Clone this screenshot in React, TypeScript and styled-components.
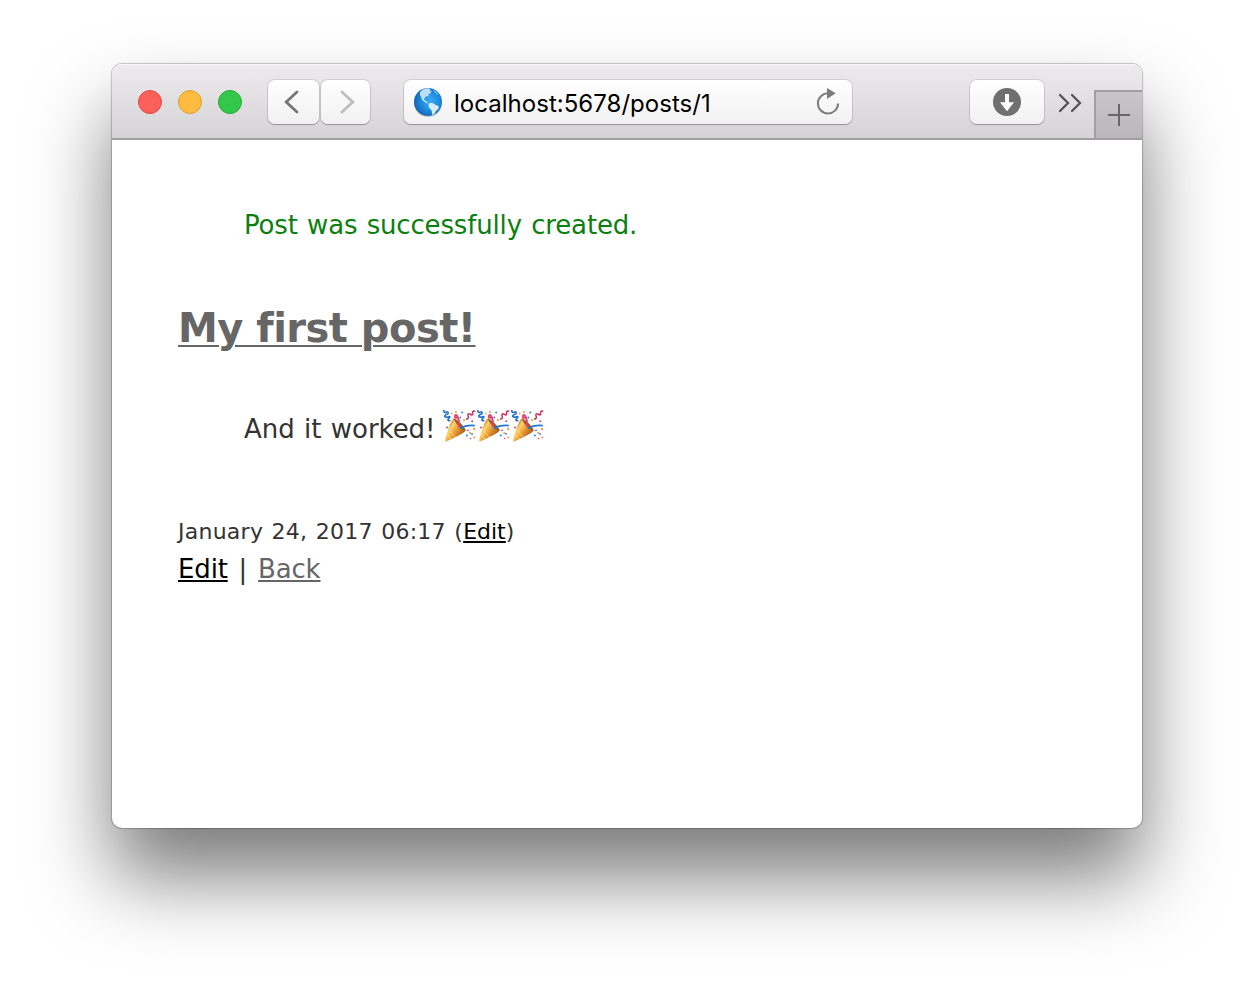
import React from "react";
import styled, { createGlobalStyle } from "styled-components";

const GlobalStyle = createGlobalStyle`
  * { box-sizing: border-box; }
  html, body { margin: 0; background: #fff; }
  body { overflow: hidden; }
`;

const Desktop = styled.div`
  width: 1254px;
  height: 988px;
  padding: 64px 112px 160px;
  background: #fff;
`;

const Window = styled.main`
  width: 1030px;
  height: 764px;
  border-radius: 10px;
  background: #fff;
  box-shadow: 0 0 1px 1px rgba(0, 0, 0, 0.22), 0 49px 80px rgba(0, 0, 0, 0.52);
`;

const Toolbar = styled.header`
  display: flex;
  align-items: flex-start;
  height: 76px;
  padding: 16px 0 0 26px;
  border-radius: 10px 10px 0 0;
  border-bottom: 2px solid #a19fa2;
  background: linear-gradient(#edebee, #d5d3d6);
  box-shadow: inset 0 1px 0 #f7f6f8;
`;

const Lights = styled.div`
  display: flex;
  gap: 16px;
  margin: 10px 26px 0 0;
`;

const Light = styled.span<{ $fill: string; $edge: string }>`
  width: 24px;
  height: 24px;
  border-radius: 50%;
  border: 1px solid ${(p) => p.$edge};
  background: ${(p) => p.$fill};
`;

const Button = styled.button<{ $width: number }>`
  display: flex;
  align-items: center;
  justify-content: center;
  width: ${(p) => p.$width}px;
  height: 44px;
  margin: 0;
  padding: 0;
  border: 0;
  border-radius: 7px;
  background: linear-gradient(#fff, #f1f1f1);
  box-shadow: 0 0 0 1px rgba(0, 0, 0, 0.1), 0 1px 1px rgba(0, 0, 0, 0.25);
`;

const NavButtons = styled.nav`
  display: flex;
  gap: 2px;
  margin-right: 34px;
`;

const AddressBar = styled.div`
  display: flex;
  align-items: center;
  width: 448px;
  height: 44px;
  margin-right: 118px;
  padding: 0 12px 0 9px;
  border-radius: 7px;
  background: linear-gradient(#fff, #f1f1f1);
  box-shadow: 0 0 0 1px rgba(0, 0, 0, 0.1), 0 1px 1px rgba(0, 0, 0, 0.25);
`;

const Url = styled.span`
  flex: 1;
  padding: 3px 0 0 11px;
  font: 24px/30px Inter, sans-serif;
  letter-spacing: 0.03px;
  color: #000;
  white-space: nowrap;
`;

const Overflow = styled.div`
  display: flex;
  margin: 12px 12px 0 14px;
`;

const NewTab = styled.div`
  display: flex;
  align-items: center;
  justify-content: center;
  flex: 1;
  height: 48px;
  margin-top: 10px;
  border-top: 2px solid #a19fa2;
  border-left: 2px solid #a19fa2;
  background: linear-gradient(#c8c6c9, #b9b7ba);
`;

const Page = styled.article`
  padding: 67px 66px 0;
  font-family: Verdana, "DejaVu Sans", sans-serif;
  font-size: 26px;
  line-height: 36px;
  color: #333;
  a { text-decoration-thickness: 2px; text-underline-offset: 2px; }
`;

const Paragraph = styled.p<{ $color?: string; $spacing: number }>`
  display: flex;
  height: 36px;
  margin: 0 0 0 66px;
  color: ${(p) => p.$color || "#333"};
  letter-spacing: ${(p) => p.$spacing}px;
  word-spacing: 1.2px;
  white-space: pre;
`;

const Title = styled.h1`
  margin: 61px 0 59px;
  font-size: 40px;
  line-height: 48px;
  letter-spacing: -0.52px;
  a { text-underline-offset: 3px; }
`;

const Link = styled.a<{ $muted?: boolean }>`
  color: ${(p) => (p.$muted ? "#666" : "#000")};
  text-decoration: underline;
`;

const Stamp = styled.div`
  margin-top: 67px;
  font-size: 22px;
  line-height: 36px;
  letter-spacing: 0.25px;
  word-spacing: 1.2px;
  a { letter-spacing: 0; }
`;

const Actions = styled.div`
  margin-top: 1px;
  letter-spacing: -0.15px;
  word-spacing: 2.7px;
`;

const Party = styled.span`
  display: flex;
  margin: -2px 0 0 -2px;
`;

const ChevronIcon = styled.svg<{ $shift: number }>`
  transform: translateX(${(p) => p.$shift}px);
`;

const Chevron = ({ color, flip }: { color: string; flip?: boolean }) => (
  <ChevronIcon $shift={flip ? 1 : -2} width="16" height="26" viewBox="0 0 16 26" fill="none" stroke={color} strokeWidth="2.8" strokeLinecap="round">
    <path d={flip ? "M3 3l10.8 10L3 23" : "M13 3L2.2 13 13 23"} />
  </ChevronIcon>
);

const Globe = () => (
  <svg width="30" height="32" viewBox="0 0 30 32">
    <defs>
      <radialGradient id="sea" cx=".58" cy=".48" r=".62">
        <stop offset="0" stopColor="#38adf6" />
        <stop offset=".55" stopColor="#2088dc" />
        <stop offset="1" stopColor="#125da8" />
      </radialGradient>
    </defs>
    <ellipse cx="15" cy="17.3" rx="14" ry="14" fill="#000" opacity=".15" />
    <circle cx="15" cy="16" r="14" fill="url(#sea)" />
    <path d="M7 6Q10 2.5 15 2.2L17.5 3 16.5 4.4 18.4 5 17.8 7.1 15.5 8.2 15.8 10.5 13.8 10 11.4 12 11.2 14.2 13.4 15 15 17.2 14.2 17.5 11.4 15.8 9 14.1 8.1 11 6.8 8.8Z" fill="#b9e0f8" />
    <path d="M15.5 18l2-1.2 3.2.6 2 1.6 3.2 1.2-.8 3.1-2.2 1.4-1.4 3-2.2 1.2-.7-4.5-2.8-3.2z" fill="#d4edfb" />
    <path d="M20 3.3l3 1.8 2.6 3.5-1.8.2-2.3-2.6z" fill="#78c6f3" opacity=".7" />
  </svg>
);

const Reload = () => (
  <svg width="24" height="28" viewBox="0 0 24 28">
    <path d="M12.5 5.3A10.1 10.1 0 1 0 22.1 15.5" fill="none" stroke="#7c7c7c" strokeWidth="2" />
    <path d="M11 0v11l8.8-5.8z" fill="#7c7c7c" />
  </svg>
);

const Download = () => (
  <svg width="28" height="28" viewBox="0 0 28 28">
    <circle cx="14" cy="14" r="14" fill="#707070" />
    <path d="M12 6h4v8.2h5L14 23.2 7 14.2h5z" fill="#fff" />
  </svg>
);

const Popper = () => (
  <svg width="34" height="34" viewBox="0 0 34 34">
    <defs>
      <linearGradient id="cone" x1="0" y1="0" x2="1" y2=".75">
        <stop offset=".15" stopColor="#9a5518" />
        <stop offset=".38" stopColor="#ffd36b" />
        <stop offset=".62" stopColor="#e6962e" />
        <stop offset="1" stopColor="#8a4813" />
      </linearGradient>
    </defs>
    <path d="M10.8 9.2Q18.5 13 22.8 21.6Q20 25.2 3.3 32.4Q1.6 32.7 2.2 30.8Q7 12.3 10.8 9.2z" fill="url(#cone)" />
    <path d="M10.8 9.2Q18.5 13 22.8 21.6Q20 21.8 15.5 17Q11.2 12.5 10.8 9.2z" fill="#a35b1c" />
    <path d="M6.7 20Q8 25 12.2 28M5 25Q6 28.5 8.3 30" stroke="#ffe189" strokeWidth="1" fill="none" opacity=".75" />
    <path d="M15.8 18Q16.6 12 14.7 7.8Q12.8 4.5 11.8 7.2Q11.6 9.6 14.2 8.3" stroke="#e63f70" strokeWidth="1.9" fill="none" />
    <path d="M16.8 19.5Q23 15.8 31.8 16.6" stroke="#2477d2" strokeWidth="1.8" fill="none" />
    <path d="M1 1Q.2 4 3 3.2Q5.8 2 5 4.8Q.2 6.4 2.4 8Q4.6 8.3 6.2 7.5Q7.8 7.6 5.6 9.6Q3.6 11.8 7.4 11.8" stroke="#2472cf" strokeWidth="1.6" fill="none" />
    <path d="M32.3 2.4Q29.4 1.2 29.6 4Q30.2 7 27.2 5.2Q24.2 4 25.1 7Q26.3 9.7 23 10.2" stroke="#c93562" strokeWidth="1.6" fill="none" />
    <g fill="#e89b4f"><circle cx="13" cy="2.9" r="1" /><circle cx="31.2" cy="20" r="1.2" /><circle cx="27.2" cy="24" r="1" /><circle cx="31.3" cy="28.5" r="1" /></g>
    <g fill="#3580d4"><circle cx="19.2" cy="3.5" r="1" /><circle cx="17.4" cy="8.5" r=".9" /><circle cx="23.9" cy="26.5" r="1" /><circle cx="29" cy="25" r=".9" /></g>
    <g fill="#d34470"><circle cx="4" cy="18.4" r="1" /><circle cx="25" cy="21.3" r=".9" /><circle cx="29.2" cy="12.2" r="1" /><circle cx="27.6" cy="29.5" r=".8" /></g>
    <g fill="#e8b538"><circle cx="8.7" cy="4.5" r="1" /><circle cx="21" cy="11.2" r="1.1" /></g>
  </svg>
);

export default function App() {
  return (
    <>
      <GlobalStyle />
      <Desktop>
        <Window>
          <Toolbar>
            <Lights>
              <Light $fill="#fc605b" $edge="#e2463f" />
              <Light $fill="#fdbc40" $edge="#dea034" />
              <Light $fill="#34c84a" $edge="#22aa35" />
            </Lights>
            <NavButtons>
              <Button $width={51} aria-label="Back"><Chevron color="#767676" /></Button>
              <Button $width={49} aria-label="Forward"><Chevron color="#bdbdbd" flip /></Button>
            </NavButtons>
            <AddressBar>
              <Globe />
              <Url>localhost:5678/posts/1</Url>
              <Reload />
            </AddressBar>
            <Button $width={74} aria-label="Downloads"><Download /></Button>
            <Overflow>
              <svg width="24" height="22" viewBox="0 0 24 22" fill="none" stroke="#555358" strokeWidth="2.3" strokeLinecap="round">
                <path d="M2 3l8 8-8 8M14 3l8 8-8 8" />
              </svg>
            </Overflow>
            <NewTab>
              <svg width="22" height="22" viewBox="0 0 22 22" stroke="#68666a" strokeWidth="2">
                <path d="M11 0v22M0 11h22" />
              </svg>
            </NewTab>
          </Toolbar>
          <Page>
            <Paragraph $color="#0b800f" $spacing={-0.16}>Post was successfully created.</Paragraph>
            <Title><Link $muted>My first post!</Link></Title>
            <Paragraph $spacing={-0.04}>
              And it worked! <Party><Popper /><Popper /><Popper /></Party>
            </Paragraph>
            <Stamp>January 24, 2017 06:17 (<Link>Edit</Link>)</Stamp>
            <Actions><Link>Edit</Link> | <Link $muted>Back</Link></Actions>
          </Page>
        </Window>
      </Desktop>
    </>
  );
}
